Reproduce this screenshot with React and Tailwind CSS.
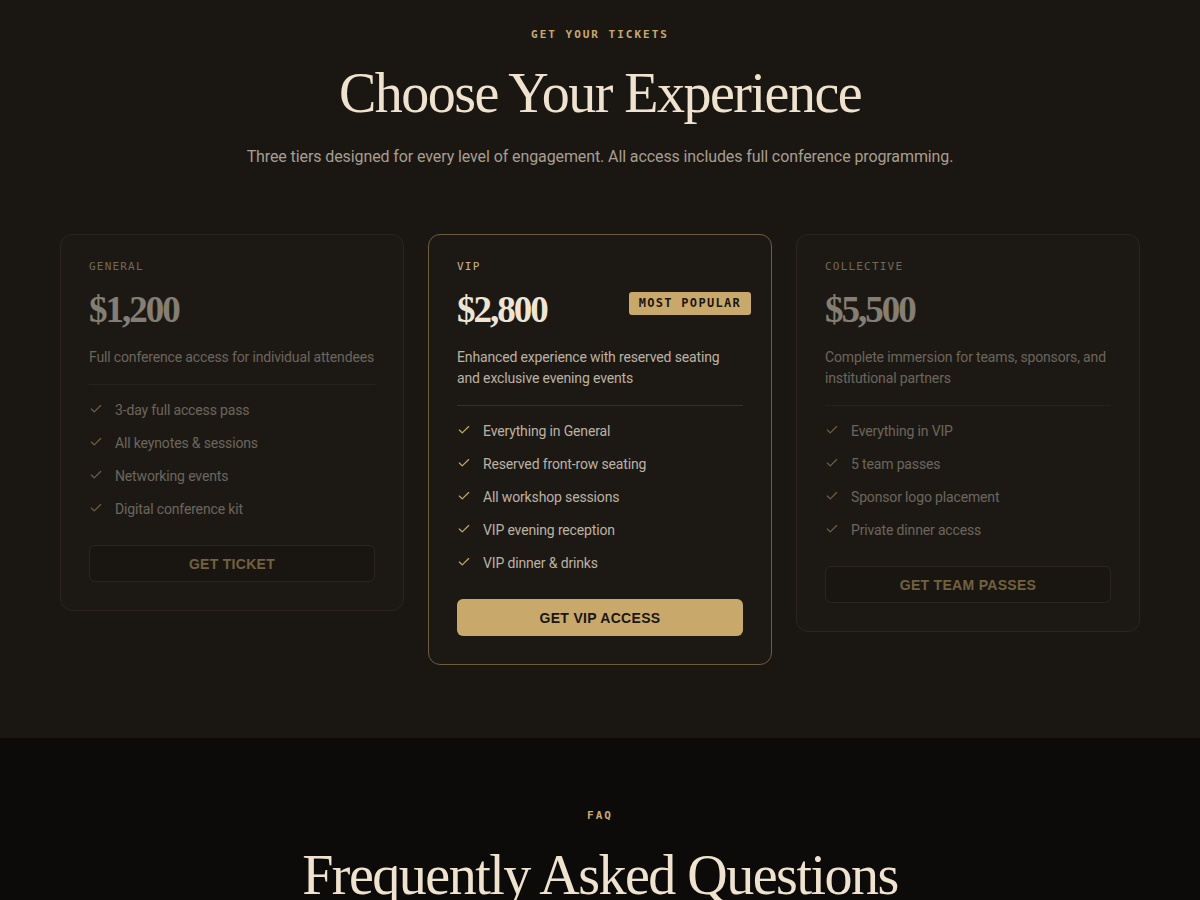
import React from 'react';
import { Check } from 'lucide-react';

const tiers = [
    {
        name: 'General',
        price: '$1,200',
        blurb: 'Full conference access for individual attendees',
        features: ['3-day full access pass', 'All keynotes & sessions', 'Networking events', 'Digital conference kit'],
        cta: 'Get Ticket',
    },
    {
        name: 'VIP',
        price: '$2,800',
        blurb: 'Enhanced experience with reserved seating and exclusive evening events',
        features: ['Everything in General', 'Reserved front-row seating', 'All workshop sessions', 'VIP evening reception', 'VIP dinner & drinks'],
        cta: 'Get VIP Access',
        featured: true,
    },
    {
        name: 'Collective',
        price: '$5,500',
        blurb: 'Complete immersion for teams, sponsors, and institutional partners',
        features: ['Everything in VIP', '5 team passes', 'Sponsor logo placement', 'Private dinner access'],
        cta: 'Get Team Passes',
    },
];

const TierCard = ({ tier }) => {
    const featured = tier.featured;

    return (
        <div
            className={
                featured
                    ? 'relative rounded-xl border border-[#6e5c3f] bg-[#1c1915] px-7 pt-6 pb-7'
                    : 'relative rounded-xl border border-[#3a332b] bg-[#1e1b17] px-7 pt-6 pb-7 opacity-50'
            }
        >
            {featured && (
                <span className="absolute top-[57px] right-5 rounded-[3px] bg-[#c9a96b] px-2.5 py-[4px] font-['DejaVu_Sans_Mono',monospace] text-[12px] leading-[15px] font-bold tracking-[1.3px] text-[#1a1612]">
                    MOST POPULAR
                </span>
            )}

            <div className="font-['DejaVu_Sans_Mono',monospace] text-[11px] leading-4 tracking-[1.2px] uppercase text-[#c9b791]">
                {tier.name}
            </div>

            <div className="mt-[15px] font-['Liberation_Serif',serif] text-[37px] leading-[40px] font-bold tracking-[-2px] text-[#efe5d3]">
                {tier.price}
            </div>

            <p className="mt-[17px] font-['Roboto',sans-serif] text-sm leading-[21px] tracking-[-0.15px] text-[#bcb2a2]">
                {tier.blurb}
            </p>

            <div className="mt-4 border-t border-[#332e27]"></div>

            <ul className="mt-[15px] flex flex-col gap-[12px]">
                {tier.features.map((f) => (
                    <li key={f} className="flex items-center gap-3 font-['Roboto',sans-serif] text-sm leading-[21px] tracking-[-0.15px] text-[#bcb2a2]">
                        <Check className="-mt-1 h-3.5 w-3.5 text-[#c9a96b]" strokeWidth={2} />
                        <span>{f}</span>
                    </li>
                ))}
            </ul>

            <button
                className={
                    featured
                        ? "mt-[25px] w-full h-[37px] rounded-md bg-[#c9a96b] font-['Liberation_Sans',sans-serif] text-sm font-bold uppercase tracking-[0.3px] text-[#1a1612]"
                        : "mt-[25px] w-full h-[37px] rounded-md border border-[#3a332b] bg-[#191612] font-['Liberation_Sans',sans-serif] text-sm font-bold uppercase tracking-[0.3px] text-[#c9a96b]"
                }
            >
                {tier.cta}
            </button>
        </div>
    );
};

export default function App() {
    return (
        <div className="min-h-[900px] bg-[#0c0b0a]">
            {/* tickets */}
            <section className="bg-[#1a1713] pt-[27px] pb-[73px]">
                <div className="text-center font-['DejaVu_Sans_Mono',monospace] text-[11px] leading-4 font-bold tracking-[2px] text-[#c9a96b]">
                    GET YOUR TICKETS
                </div>
                <h2 className="mt-[19px] text-center font-['Liberation_Serif',serif] text-[56px] leading-[62px] tracking-[-1.5px] text-[#efe3cf]">
                    Choose Your Experience
                </h2>
                <p className="mt-[21px] text-center font-['Roboto',sans-serif] text-base leading-6 tracking-[-0.1px] text-[#a89e8f]">
                    Three tiers designed for every level of engagement. All access includes full conference programming.
                </p>

                <div className="mx-auto mt-[65px] grid max-w-[1080px] grid-cols-3 items-start gap-6">
                    {tiers.map((t) => (
                        <TierCard key={t.name} tier={t} />
                    ))}
                </div>
            </section>

            {/* faq */}
            <section className="pt-[70px] pb-16">
                <div className="text-center font-['DejaVu_Sans_Mono',monospace] text-[11px] leading-4 font-bold tracking-[2px] text-[#c9a96b]">
                    FAQ
                </div>
                <h2 className="mt-[20px] text-center font-['Liberation_Serif',serif] text-[56px] leading-[62px] tracking-[-1.5px] text-[#efe3cf]">
                    Frequently Asked Questions
                </h2>
            </section>
        </div>
    );
}
